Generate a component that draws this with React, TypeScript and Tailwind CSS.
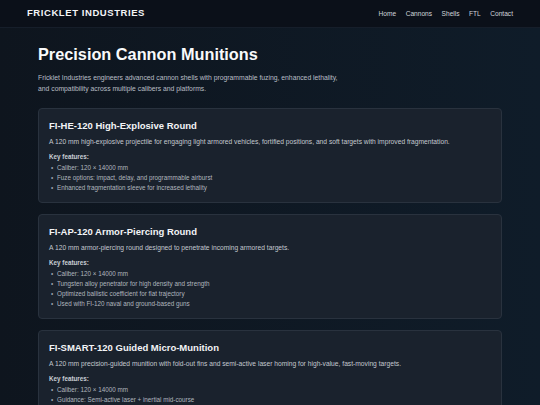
const shells = [
  {
    name: "FI-HE-120 High-Explosive Round",
    summary:
      "A 120 mm high-explosive projectile for engaging light armored vehicles, fortified positions, and soft targets with improved fragmentation.",
    features: [
      "Caliber: 120 × 14000 mm",
      "Fuze options: impact, delay, and programmable airburst",
      "Enhanced fragmentation sleeve for increased lethality",
    ],
  },
  {
    name: "FI-AP-120 Armor-Piercing Round",
    summary: "A 120 mm armor-piercing round designed to penetrate incoming armored targets.",
    features: [
      "Caliber: 120 × 14000 mm",
      "Tungsten alloy penetrator for high density and strength",
      "Optimized ballistic coefficient for flat trajectory",
      "Used with FI-120 naval and ground-based guns",
    ],
  },
  {
    name: "FI-SMART-120 Guided Micro-Munition",
    summary:
      "A 120 mm precision-guided munition with fold-out fins and semi-active laser homing for high-value, fast-moving targets.",
    features: [
      "Caliber: 120 × 14000 mm",
      "Guidance: Semi-active laser + inertial mid-course",
      "Range: up to 12 km in standard configuration",
    ],
  },
];

const links = ["Home", "Cannons", "Shells", "FTL", "Contact"];

export default function App() {
  return (
    <div className="min-h-screen antialiased bg-gradient-to-r from-[#0e151e] to-[#0f1c29] font-['Liberation_Sans',Arial,sans-serif] text-[#e5e7eb]">
      <header className="h-[28px] flex items-center justify-between px-[27px] bg-[#0b1019] border-b border-[#161e2a]">
        <span className="text-[9.5px] font-bold tracking-[0.06em] text-[#f3f4f6]">FRICKLET INDUSTRIES</span>
        <nav className="flex gap-[9.5px] text-[6.6px] text-[#d1d5db]">
          {links.map((l) => (
            <a key={l}>{l}</a>
          ))}
        </nav>
      </header>

      <main className="px-[38px] pt-[16px] pb-10">
        <h1 className="text-[16.3px] font-bold leading-[20px] text-[#f9fafb]">Precision Cannon Munitions</h1>
        <p className="mt-[9px] text-[6.8px] leading-[10.5px] text-[#b9bec6]">
          Fricklet Industries engineers advanced cannon shells with programmable fuzing, enhanced lethality,
          <br />
          and compatibility across multiple calibers and platforms.
        </p>

        <div className="mt-[14px] flex flex-col gap-[11px]">
          {shells.map((s) => (
            <section
              key={s.name}
              className="rounded-[4px] border border-[#29323e] bg-[#1a222d] px-[10px] pt-[10px] pb-[9px]"
            >
              <h2 className="text-[9.5px] font-bold leading-[14px] text-[#f3f4f6]">{s.name}</h2>
              <p className="mt-[4px] text-[6.7px] leading-[10px] text-[#c3c8cf]">{s.summary}</p>
              <p className="mt-[5px] text-[6.3px] leading-[10px] font-bold text-[#c9ced5]">Key features:</p>
              <ul className="mt-[1px] text-[6.3px] leading-[10px] text-[#b0b6bf]">
                {s.features.map((f) => (
                  <li key={f} className="flex">
                    <span className="w-[8px] pl-[2px] text-[#9ca3af]">•</span>
                    <span>{f}</span>
                  </li>
                ))}
              </ul>
            </section>
          ))}
        </div>
      </main>
    </div>
  );
}
